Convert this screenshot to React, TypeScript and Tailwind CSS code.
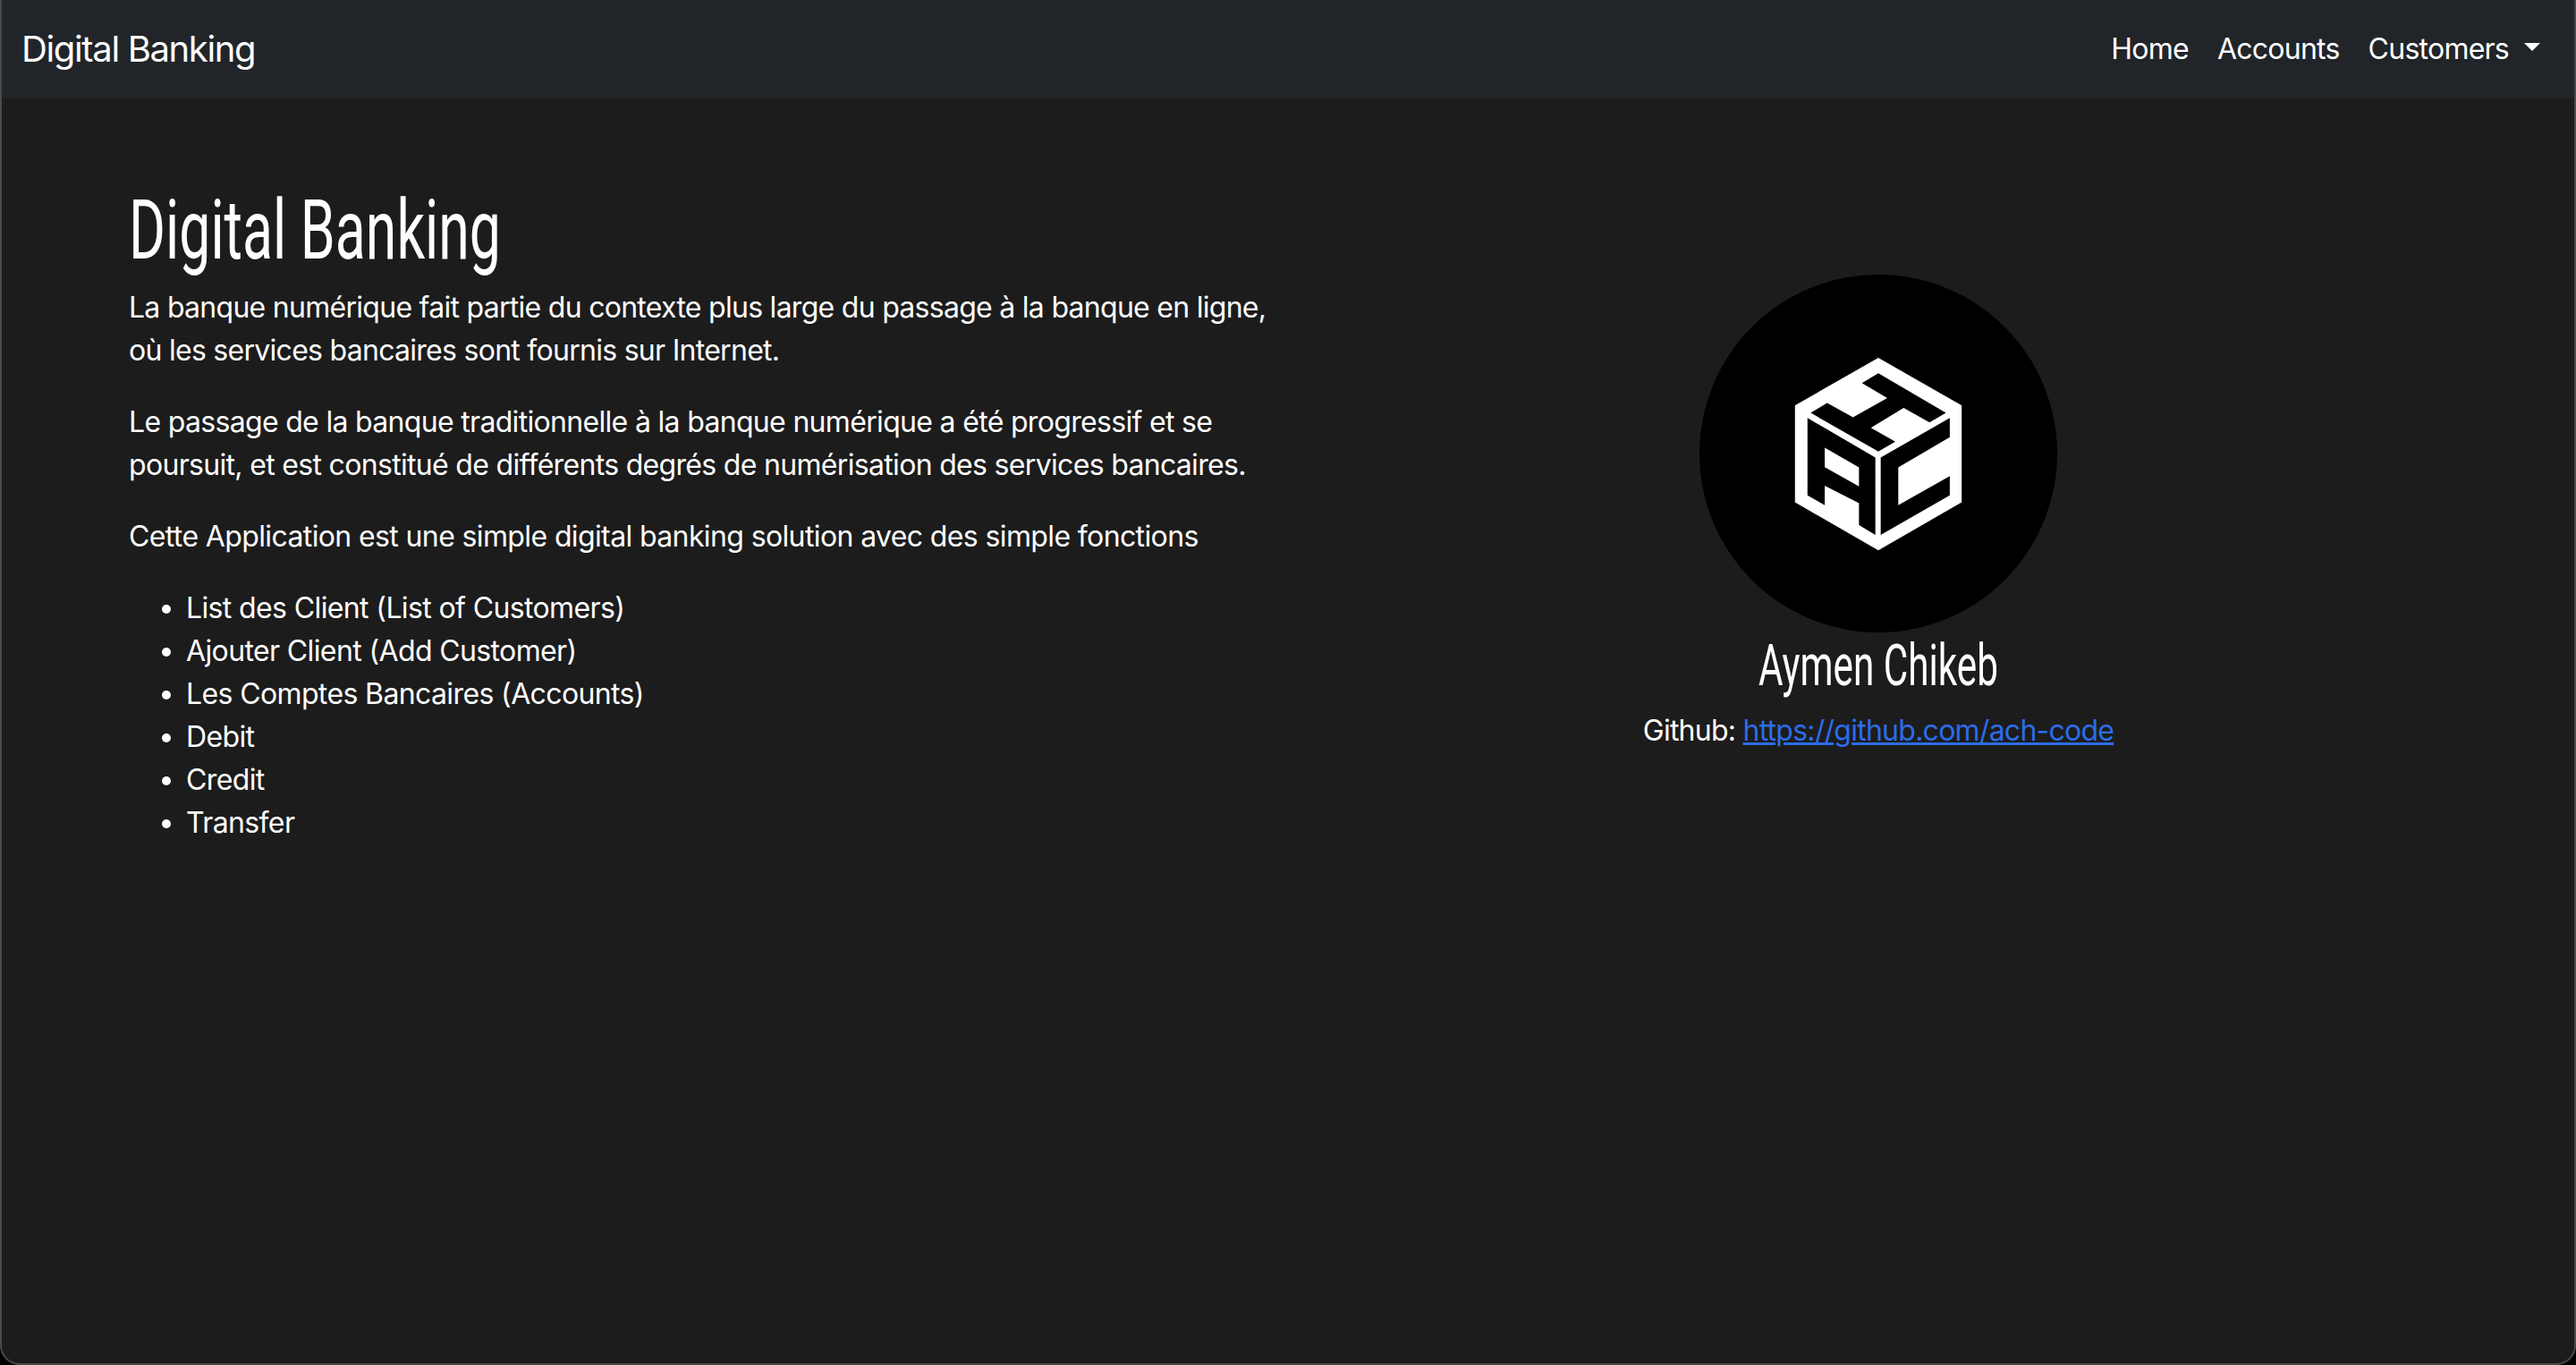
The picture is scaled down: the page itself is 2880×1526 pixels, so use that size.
export default function App() {
  return (
    <div className="relative h-[1526px] w-[2880px] overflow-hidden bg-black text-white [font-family:Inter,'Liberation_Sans',sans-serif]">
      <div className="flex h-full flex-col overflow-hidden rounded-b-[22px] bg-[#1c1c1c]">
        <nav className="flex h-[110px] shrink-0 items-center justify-between bg-[#212529] px-6">
          <a className="text-[40px] leading-[60px] tracking-[-1.35px]">Digital Banking</a>
          <ul className="flex text-[32px] leading-[48px] tracking-[-0.75px]">
            <li className="px-4">Home</li>
            <li className="px-4">Accounts</li>
            <li className="flex items-center px-4">
              Customers
              <span className="ml-[17px] mt-[-6px] h-0 w-0 border-x-[9.6px] border-t-[9.6px] border-x-transparent border-t-white" />
            </li>
          </ul>
        </nav>
        <main className="mx-[120px] flex items-center pt-[98px]">
          <section className="w-[1320px] px-6 text-[32px] leading-[48px] tracking-[-0.62px]">
            <h1 className="mb-[14px] origin-left scale-x-[0.68] whitespace-nowrap pt-[2px] text-[92px] font-normal leading-[96px] tracking-normal [font-family:Roboto,sans-serif]">Digital Banking</h1>
            <p className="mb-8 whitespace-nowrap tracking-[-0.72px]">
              La banque numérique fait partie du contexte plus large du passage à la banque en ligne,
              <br />
              où les services bancaires sont fournis sur Internet.
            </p>
            <p className="mb-8 whitespace-nowrap tracking-[-0.68px]">
              Le passage de la banque traditionnelle à la banque numérique a été progressif et se
              <br />
              poursuit, et est constitué de différents degrés de numérisation des services bancaires.
            </p>
            <p className="mb-8">Cette Application est une simple digital banking solution avec des simple fonctions</p>
            <ul className="list-disc pl-16">
              <li>List des Client (List of Customers)</li>
              <li>Ajouter Client (Add Customer)</li>
              <li>Les Comptes Bancaires (Accounts)</li>
              <li>Debit</li>
              <li>Credit</li>
              <li>Transfer</li>
            </ul>
          </section>
          <section className="flex w-[1320px] flex-col items-center px-6 pb-[4px] text-[32px] leading-[48px] tracking-[-0.75px]">
            <div className="flex h-[400px] w-[400px] items-center justify-center rounded-full bg-black">
              <svg viewBox="0 0 600 706" className="h-[235px] w-[200px]" fillRule="evenodd">
                <polygon fill="#fff" points="300,30 580,190 580,515 300,677 20,515 20,190" />
                <polygon fill="#000" points="300,82 527,215 472,247 385,198 275,265 357,312 300,345 73,215 128,182 215,230 330,165 245,115" />
                <path fill="#000" d="M62 232L290 365V625L235 592V518L120 460V525L62 492ZM120 332V397L235 462V398Z" />
                <polygon fill="#000" points="540,232 540,297 367,398 367,525 540,427 540,492 308,625 308,365" />
              </svg>
            </div>
            <h3 className="mb-[15px] mt-[4px] origin-center scale-x-[0.66] whitespace-nowrap text-[64px] font-normal leading-[67px] tracking-normal [font-family:Roboto,sans-serif]">Aymen Chikeb</h3>
            <p>
              Github: <a className="text-[#2b6de8] underline">https://github.com/ach-code</a>
            </p>
          </section>
        </main>
      </div>
      <div className="pointer-events-none absolute inset-0 rounded-b-[22px] border-x-2 border-b-2 border-[#4a4a4a]" />
    </div>
  );
}
